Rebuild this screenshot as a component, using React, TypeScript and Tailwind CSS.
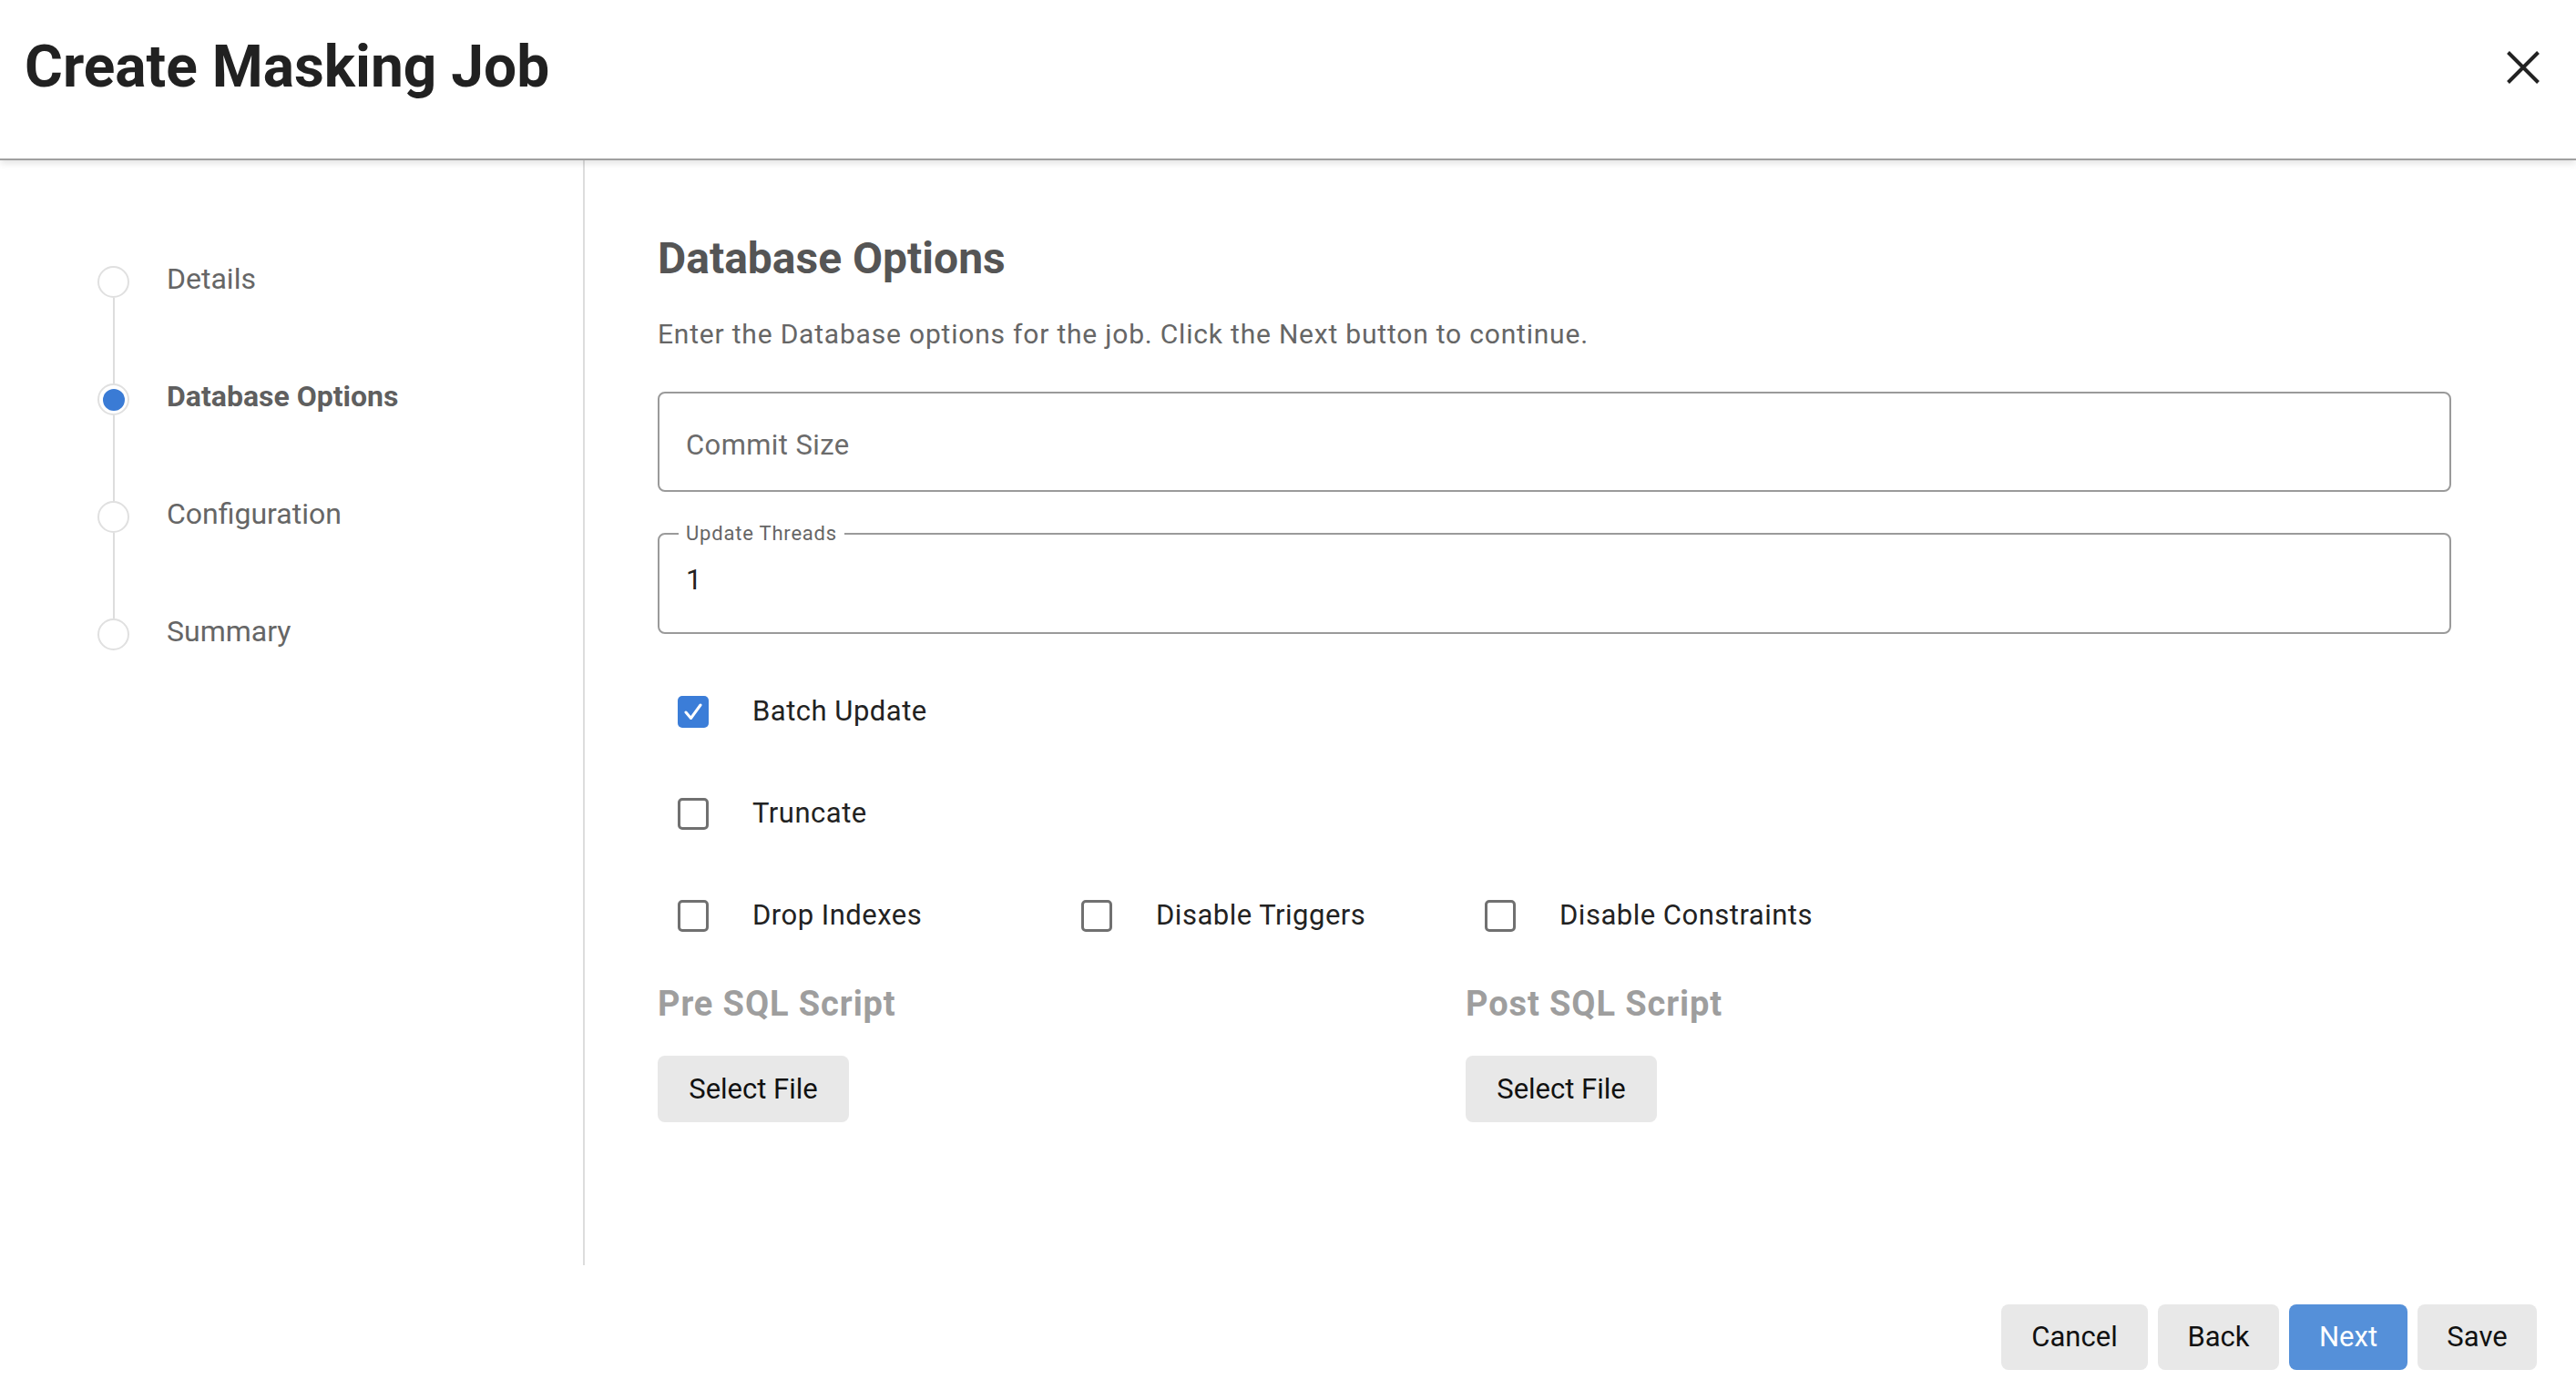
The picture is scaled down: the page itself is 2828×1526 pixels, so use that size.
import { useState } from "react";

const steps = ["Details", "Database Options", "Configuration", "Summary"];

function StepDot({ active }: { active: boolean }) {
  return (
    <div className="w-[35px] h-[35px] rounded-full border-2 border-[#e0e0e0] bg-white flex items-center justify-center shrink-0">
      {active && <div className="w-[24px] h-[24px] rounded-full bg-[#3a7bd5]" />}
    </div>
  );
}

function Stepper({ current }: { current: number }) {
  return (
    <div className="flex flex-col pt-[116px] pl-[107px]">
      {steps.map((label, i) => (
        <div key={label} className="flex flex-col">
          <div className="flex items-center h-[35px]">
            <StepDot active={i === current} />
            <span
              className={
                i === current
                  ? "ml-[41px] text-[32px] leading-[38px] font-bold text-[#5f5f5f] -mt-[8px]"
                  : "ml-[41px] text-[32px] leading-[38px] text-[#666666] -mt-[8px]"
              }
            >
              {label}
            </span>
          </div>
          {i < steps.length - 1 && (
            <div className="w-[35px] h-[94px] flex justify-center">
              <div className="w-[2px] h-full bg-[#dddddd]" />
            </div>
          )}
        </div>
      ))}
    </div>
  );
}

function Checkbox({
  label,
  checked,
  onToggle,
}: {
  label: string;
  checked: boolean;
  onToggle: () => void;
}) {
  return (
    <button type="button" onClick={onToggle} className="flex items-center w-[443px] text-left">
      {checked ? (
        <span className="w-[34px] h-[35px] rounded-[5px] bg-[#3b7dd8] flex items-center justify-center shrink-0">
          <svg width="34" height="35" viewBox="0 0 34 35">
            <polyline
              points="9,18 14.5,24.5 25,10"
              fill="none"
              stroke="white"
              strokeWidth="3"
              strokeLinecap="round"
              strokeLinejoin="round"
            />
          </svg>
        </span>
      ) : (
        <span className="w-[34px] h-[35px] rounded-[5px] border-[3px] border-[#707070] bg-white shrink-0" />
      )}
      <span className="ml-[48px] text-[31px] leading-[36px] tracking-[0.5px] text-[#222222]">{label}</span>
    </button>
  );
}

function GrayButton({ children, className }: { children: React.ReactNode; className?: string }) {
  return (
    <button
      type="button"
      className={
        "h-[72px] rounded-[8px] bg-[#e8e8e8] text-[#111111] text-[31px] leading-[36px] flex items-center justify-center " +
        (className || "")
      }
    >
      {children}
    </button>
  );
}

export default function App() {
  const [opts, setOpts] = useState<Record<string, boolean>>({
    batch: true,
    truncate: false,
    drop: false,
    triggers: false,
    constraints: false,
  });
  const toggle = (k: string) => setOpts((o) => ({ ...o, [k]: !o[k] }));

  return (
    <div
      className="w-[2828px] h-[1526px] bg-white flex flex-col overflow-hidden"
      style={{ fontFamily: "Roboto, 'Noto Sans', Arial, sans-serif" }}
    >
      {/* header */}
      <div className="relative z-10 h-[176px] shrink-0 border-b-2 border-[#a0a0a0] shadow-[0_3px_8px_rgba(0,0,0,0.12)] flex items-center justify-between pl-[27px] pr-[40px] pb-[26px]">
        <h1 className="text-[64px] leading-[76px] font-bold text-[#212121]">Create Masking Job</h1>
        <button type="button" className="w-[36px] h-[36px]">
          <svg width="36" height="36" viewBox="0 0 36 36">
            <path d="M1.5 1.5 L34.5 34.5 M34.5 1.5 L1.5 34.5" stroke="#222222" strokeWidth="4" />
          </svg>
        </button>
      </div>

      {/* body */}
      <div className="h-[1213px] shrink-0 flex">
        <div className="w-[642px] shrink-0 border-r-2 border-[#dddddd]">
          <Stepper current={1} />
        </div>

        <div className="flex-1 pl-[80px] pr-[137px] pt-[80px] flex flex-col">
          <h2 className="text-[48px] leading-[56px] font-bold text-[#555555]">Database Options</h2>
          <p className="mt-[38px] text-[30px] leading-[34px] tracking-[0.8px] text-[#666666]">
            Enter the Database options for the job. Click the Next button to continue.
          </p>

          <div className="mt-[46px] h-[110px] rounded-[8px] border-2 border-[#9a9a9a] flex items-center pl-[29px]">
            <span className="mt-[8px] text-[31px] leading-[36px] tracking-[0.4px] text-[#6b6b6b]">Commit Size</span>
          </div>

          <div className="relative mt-[45px] h-[111px] rounded-[8px] border-2 border-[#9a9a9a] flex items-center pl-[29px]">
            <span className="absolute -top-[15px] left-[21px] px-[8px] bg-white text-[22px] leading-[28px] tracking-[0.8px] text-[#666666]">
              Update Threads
            </span>
            <span className="text-[31px] leading-[36px] text-[#222222] -mt-[7px]">1</span>
          </div>

          <div className="mt-[29px] ml-[22px] flex flex-col">
            <div className="h-[112px] flex items-center">
              <Checkbox label="Batch Update" checked={opts.batch} onToggle={() => toggle("batch")} />
            </div>
            <div className="h-[112px] flex items-center">
              <Checkbox label="Truncate" checked={opts.truncate} onToggle={() => toggle("truncate")} />
            </div>
            <div className="h-[112px] flex items-center">
              <Checkbox label="Drop Indexes" checked={opts.drop} onToggle={() => toggle("drop")} />
              <Checkbox label="Disable Triggers" checked={opts.triggers} onToggle={() => toggle("triggers")} />
              <Checkbox
                label="Disable Constraints"
                checked={opts.constraints}
                onToggle={() => toggle("constraints")}
              />
            </div>
          </div>

          <div className="mt-[19px] flex">
            <div className="w-[887px] flex flex-col items-start">
              <h3 className="text-[38px] leading-[44px] tracking-[0.9px] font-bold text-[#9e9e9e]">Pre SQL Script</h3>
              <GrayButton className="mt-[35px] w-[210px] h-[73px]">Select File</GrayButton>
            </div>
            <div className="flex flex-col items-start">
              <h3 className="text-[38px] leading-[44px] tracking-[0.9px] font-bold text-[#9e9e9e]">Post SQL Script</h3>
              <GrayButton className="mt-[35px] w-[210px] h-[73px]">Select File</GrayButton>
            </div>
          </div>
        </div>
      </div>

      {/* footer */}
      <div className="flex-1 flex justify-end items-start pt-[43px] pr-[43px] gap-[11px]">
        <GrayButton className="w-[161px]">Cancel</GrayButton>
        <GrayButton className="w-[133px]">Back</GrayButton>
        <button
          type="button"
          className="w-[130px] h-[72px] rounded-[8px] bg-[#5590d9] text-white text-[31px] leading-[36px] flex items-center justify-center"
        >
          Next
        </button>
        <GrayButton className="w-[131px]">Save</GrayButton>
      </div>
    </div>
  );
}
